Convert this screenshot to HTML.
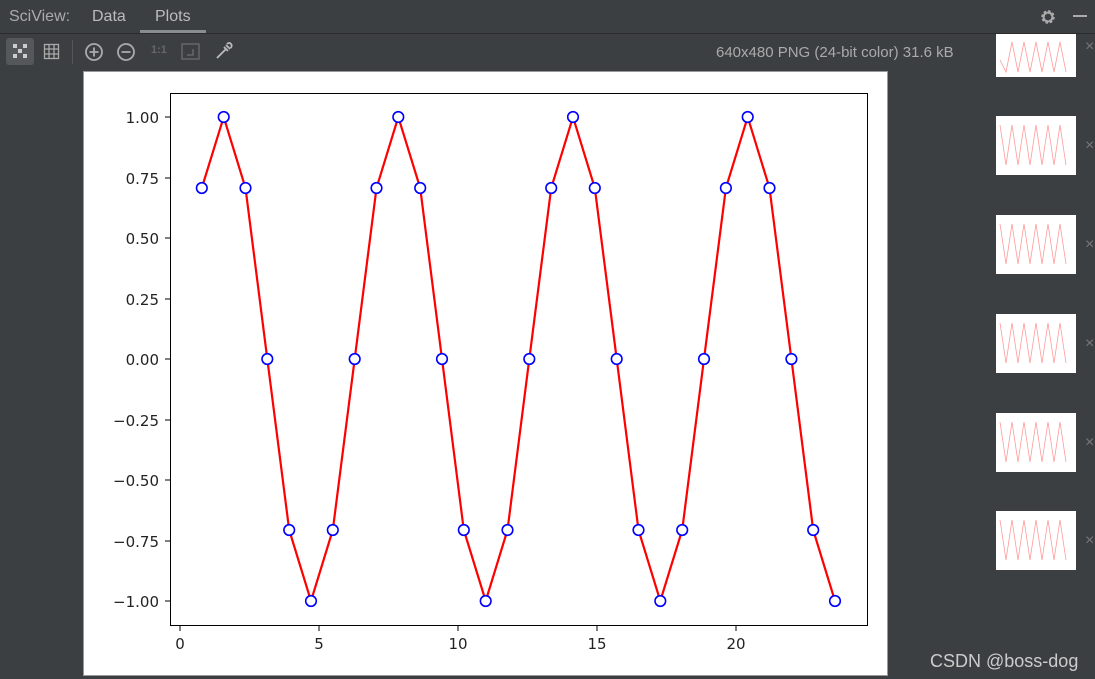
<!DOCTYPE html>
<html><head><style>
body{margin:0;width:1095px;height:679px;background:#3c3f41;overflow:hidden;position:relative;font-family:"Liberation Sans","Noto Sans CJK SC",sans-serif;color:#bbb}
.a{position:absolute}
.th{position:absolute;left:996px;width:80px;height:59px;background:#fff}
.x{position:absolute;left:1085px;color:#777;font-size:16px}
</style></head><body>
<div class="a" style="left:0;top:33px;width:1095px;height:1px;background:#2b2b2b"></div>
<div class="a" style="left:9px;top:8px;font-size:16px;color:#aaa">SciView:</div>
<div class="a" style="left:92px;top:8px;font-size:16px;color:#bbb">Data</div>
<div class="a" style="left:155px;top:8px;font-size:16px;color:#bbb">Plots</div>
<div class="a" style="left:140px;top:30px;width:66px;height:3px;background:#8a8d90"></div>
<svg class="a" style="left:1038px;top:8px" width="20" height="18" viewBox="0 0 20 18"><circle cx="10" cy="9" r="5" fill="none" stroke="#aaa" stroke-width="3.5" stroke-dasharray="2.2 1.7"/><circle cx="10" cy="9" r="4.5" fill="none" stroke="#aaa" stroke-width="2"/></svg>
<div class="a" style="left:1073px;top:15px;width:14px;height:2px;background:#aaa"></div>
<div class="a" style="left:6px;top:38px;width:28px;height:27px;background:#55585b;border-radius:3px"></div>
<svg class="a" style="left:12px;top:43px" width="17" height="17"><g fill="#ccc"><rect x="1" y="1" width="4" height="4"/><rect x="11" y="1" width="4" height="4"/><rect x="6" y="6" width="4" height="4"/><rect x="1" y="11" width="4" height="4"/><rect x="11" y="11" width="4" height="4"/></g></svg>
<svg class="a" style="left:43px;top:43px" width="17" height="17"><g fill="none" stroke="#aaa" stroke-width="1.3"><rect x="1.5" y="1.5" width="14" height="14"/><path d="M6 1v15M11 1v15M1 6h15M1 11h15"/></g></svg>
<div class="a" style="left:72px;top:40px;width:1px;height:24px;background:#555"></div>
<svg class="a" style="left:84px;top:42px" width="20" height="20"><g fill="none" stroke="#aaa" stroke-width="1.8"><circle cx="10" cy="10" r="8"/><path d="M5.5 10h9M10 5.5v9"/></g></svg>
<svg class="a" style="left:116px;top:42px" width="20" height="20"><g fill="none" stroke="#aaa" stroke-width="1.8"><circle cx="10" cy="10" r="8"/><path d="M5.5 10h9"/></g></svg>
<div class="a" style="left:151px;top:44px;font-size:11px;color:#666;font-weight:bold">1:1</div>
<svg class="a" style="left:181px;top:43px" width="19" height="17"><g fill="none" stroke="#666" stroke-width="1.5"><rect x="1" y="1" width="17" height="15"/><path d="M6 12h6v-6"/></g></svg>
<svg class="a" style="left:214px;top:41px" width="20" height="20"><g fill="none" stroke="#bbb" stroke-width="1.8"><path d="M3 17l9-9M10 6l4 4M12 4l4 4M13 3c1.5-1.5 3-1.5 4 0c1 1 1 2.5-.5 4"/></g></svg>
<div class="a" style="left:716px;top:44px;font-size:15px;color:#aaa">640x480 PNG (24-bit color) 31.6 kB</div>

<div class="th" style="top:34px;height:43px"></div>
<div class="th" style="top:116px"></div>
<div class="th" style="top:215px"></div>
<div class="th" style="top:314px"></div>
<div class="th" style="top:413px"></div>
<div class="th" style="top:511px"></div>
<div class="x" style="top:38px">×</div>
<div class="x" style="top:137px">×</div>
<div class="x" style="top:236px">×</div>
<div class="x" style="top:335px">×</div>
<div class="x" style="top:434px">×</div>
<div class="x" style="top:532px">×</div>

<div class="a" style="left:83px;top:71px;width:803px;height:603px;border:1px solid #999;background:#fff"></div>
<svg class="a" style="left:0;top:0" width="1095" height="679" font-family="DejaVu Sans, Liberation Sans, sans-serif" font-size="15">
<rect x="170.5" y="93.5" width="697" height="532" fill="none" stroke="#000" stroke-width="1"/>
<g stroke="#000"><path d="M165 117h5M165 178h5M165 238h5M165 299h5M165 359h5M165 420h5M165 480h5M165 541h5M165 601h5M180 626v5M319 626v5M458 626v5M597 626v5M736 626v5"/></g>
<g text-anchor="end" fill="#222"><text x="159" y="123">1.00</text><text x="159" y="184">0.75</text><text x="159" y="244">0.50</text><text x="159" y="305">0.25</text><text x="159" y="365">0.00</text><text x="159" y="426">−0.25</text><text x="159" y="486">−0.50</text><text x="159" y="547">−0.75</text><text x="159" y="607">−1.00</text></g>
<g text-anchor="middle" fill="#222"><text x="180" y="649">0</text><text x="319" y="649">5</text><text x="458" y="649">10</text><text x="597" y="649">15</text><text x="736" y="649">20</text></g>
<polyline fill="none" stroke="#f00" stroke-width="2.2" points="201.8,188 223.7,117 245.5,188 267.3,359 289.2,530 311,601 332.8,530 354.7,359 376.5,188 398.3,117 420.2,188 442,359 463.8,530 485.7,601 507.5,530 529.3,359 551.2,188 573,117 594.8,188 616.7,359 638.5,530 660.3,601 682.2,530 704,359 725.9,188 747.7,117 769.5,188 791.4,359 813.2,530 835,601"/>
<g fill="#fff" stroke="#00f" stroke-width="1.6">
<circle cx="201.8" cy="188" r="5.3"/><circle cx="223.7" cy="117" r="5.3"/><circle cx="245.5" cy="188" r="5.3"/><circle cx="267.3" cy="359" r="5.3"/><circle cx="289.2" cy="530" r="5.3"/><circle cx="311" cy="601" r="5.3"/><circle cx="332.8" cy="530" r="5.3"/><circle cx="354.7" cy="359" r="5.3"/><circle cx="376.5" cy="188" r="5.3"/><circle cx="398.3" cy="117" r="5.3"/><circle cx="420.2" cy="188" r="5.3"/><circle cx="442" cy="359" r="5.3"/><circle cx="463.8" cy="530" r="5.3"/><circle cx="485.7" cy="601" r="5.3"/><circle cx="507.5" cy="530" r="5.3"/><circle cx="529.3" cy="359" r="5.3"/><circle cx="551.2" cy="188" r="5.3"/><circle cx="573" cy="117" r="5.3"/><circle cx="594.8" cy="188" r="5.3"/><circle cx="616.7" cy="359" r="5.3"/><circle cx="638.5" cy="530" r="5.3"/><circle cx="660.3" cy="601" r="5.3"/><circle cx="682.2" cy="530" r="5.3"/><circle cx="704" cy="359" r="5.3"/><circle cx="725.9" cy="188" r="5.3"/><circle cx="747.7" cy="117" r="5.3"/><circle cx="769.5" cy="188" r="5.3"/><circle cx="791.4" cy="359" r="5.3"/><circle cx="813.2" cy="530" r="5.3"/><circle cx="835" cy="601" r="5.3"/>
</g>
<g fill="none" stroke="#f99" stroke-width="0.8">
<path d="M1000 60l6 12 6-30 6 30 6-30 6 30 6-30 6 30 6-30 6 30 6-30 6 30"/>
<path d="M1000 125l6 40 6-40 6 40 6-40 6 40 6-40 6 40 6-40 6 40 6-40 6 40"/>
<path d="M1000 224l6 40 6-40 6 40 6-40 6 40 6-40 6 40 6-40 6 40 6-40 6 40"/>
<path d="M1000 323l6 40 6-40 6 40 6-40 6 40 6-40 6 40 6-40 6 40 6-40 6 40"/>
<path d="M1000 422l6 40 6-40 6 40 6-40 6 40 6-40 6 40 6-40 6 40 6-40 6 40"/>
<path d="M1000 520l6 40 6-40 6 40 6-40 6 40 6-40 6 40 6-40 6 40 6-40 6 40"/>
</g>
</svg>
<div class="a" style="left:930px;top:651px;font-size:18px;color:#ccc">CSDN @boss-dog</div>
</body></html>
